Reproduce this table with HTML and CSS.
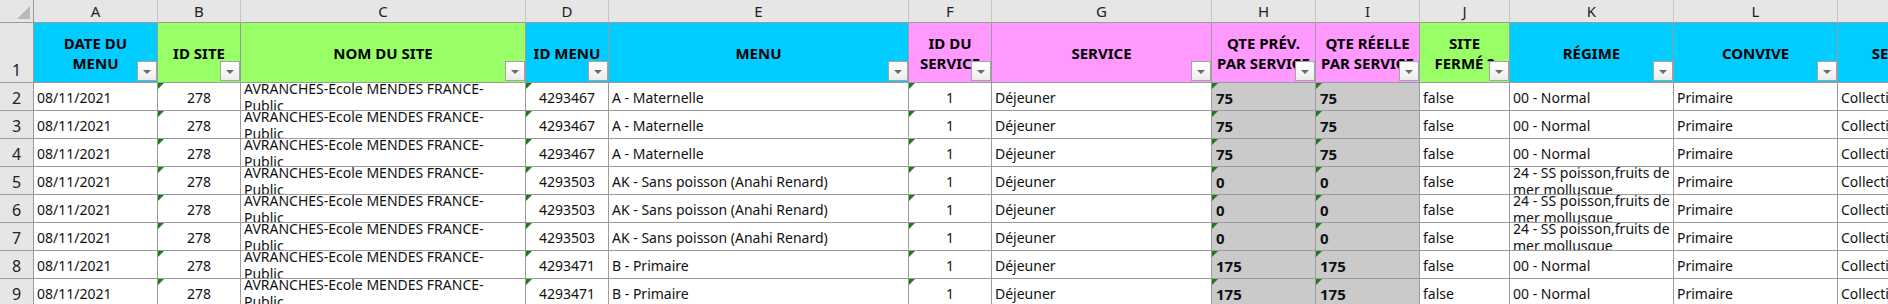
FILE: index.html
```html
<!DOCTYPE html>
<html lang="fr">
<head>
<meta charset="utf-8">
<title>Menus</title>
<link rel="stylesheet" href="styles.css">
</head>
<body>
<div class="sheet">
  <div class="corner"></div>
  <div class="lt">A</div><div class="lt">B</div><div class="lt">C</div><div class="lt">D</div><div class="lt">E</div><div class="lt">F</div><div class="lt">G</div><div class="lt">H</div><div class="lt">I</div><div class="lt">J</div><div class="lt">K</div><div class="lt">L</div><div class="lt">M</div>

  <div class="rn">1</div>
  <div class="h cy"><span>DATE DU<br>MENU</span><i class="fb"></i></div>
  <div class="h gr"><span>ID SITE</span><i class="fb"></i></div>
  <div class="h gr"><span>NOM DU SITE</span><i class="fb"></i></div>
  <div class="h cy"><span>ID MENU</span><i class="fb"></i></div>
  <div class="h cy"><span>MENU</span><i class="fb"></i></div>
  <div class="h pk"><span>ID DU<br>SERVICE</span><i class="fb"></i></div>
  <div class="h pk"><span>SERVICE</span><i class="fb"></i></div>
  <div class="h pk"><span>QTE PRÉV.<br>PAR SERVICE</span><i class="fb"></i></div>
  <div class="h pk"><span>QTE RÉELLE<br>PAR SERVICE</span><i class="fb"></i></div>
  <div class="h gr"><span>SITE<br>FERMÉ ?</span><i class="fb"></i></div>
  <div class="h cy"><span>RÉGIME</span><i class="fb"></i></div>
  <div class="h cy"><span>CONVIVE</span><i class="fb"></i></div>
  <div class="h cy"><span>SECTEUR</span><i class="fb"></i></div>

  <div class="rn">2</div>
  <div class="d">08/11/2021</div><div class="d ctr t">278</div><div class="d wr">AVRANCHES-Ecole MENDES FRANCE-<br>Public</div><div class="d ctr t">4293467</div><div class="d">A - Maternelle</div><div class="d ctr t">1</div><div class="d">Déjeuner</div><div class="d q t">75</div><div class="d q t">75</div><div class="d">false</div><div class="d">00 - Normal</div><div class="d">Primaire</div><div class="d">Collectivité</div>

  <div class="rn">3</div>
  <div class="d">08/11/2021</div><div class="d ctr t">278</div><div class="d wr">AVRANCHES-Ecole MENDES FRANCE-<br>Public</div><div class="d ctr t">4293467</div><div class="d">A - Maternelle</div><div class="d ctr t">1</div><div class="d">Déjeuner</div><div class="d q t">75</div><div class="d q t">75</div><div class="d">false</div><div class="d">00 - Normal</div><div class="d">Primaire</div><div class="d">Collectivité</div>

  <div class="rn">4</div>
  <div class="d">08/11/2021</div><div class="d ctr t">278</div><div class="d wr">AVRANCHES-Ecole MENDES FRANCE-<br>Public</div><div class="d ctr t">4293467</div><div class="d">A - Maternelle</div><div class="d ctr t">1</div><div class="d">Déjeuner</div><div class="d q t">75</div><div class="d q t">75</div><div class="d">false</div><div class="d">00 - Normal</div><div class="d">Primaire</div><div class="d">Collectivité</div>

  <div class="rn">5</div>
  <div class="d">08/11/2021</div><div class="d ctr t">278</div><div class="d wr">AVRANCHES-Ecole MENDES FRANCE-<br>Public</div><div class="d ctr t">4293503</div><div class="d">AK - Sans poisson (Anahi Renard)</div><div class="d ctr t">1</div><div class="d">Déjeuner</div><div class="d q t">0</div><div class="d q t">0</div><div class="d">false</div><div class="d wr">24 - SS poisson,fruits de<br>mer mollusque</div><div class="d">Primaire</div><div class="d">Collectivité</div>

  <div class="rn">6</div>
  <div class="d">08/11/2021</div><div class="d ctr t">278</div><div class="d wr">AVRANCHES-Ecole MENDES FRANCE-<br>Public</div><div class="d ctr t">4293503</div><div class="d">AK - Sans poisson (Anahi Renard)</div><div class="d ctr t">1</div><div class="d">Déjeuner</div><div class="d q t">0</div><div class="d q t">0</div><div class="d">false</div><div class="d wr">24 - SS poisson,fruits de<br>mer mollusque</div><div class="d">Primaire</div><div class="d">Collectivité</div>

  <div class="rn">7</div>
  <div class="d">08/11/2021</div><div class="d ctr t">278</div><div class="d wr">AVRANCHES-Ecole MENDES FRANCE-<br>Public</div><div class="d ctr t">4293503</div><div class="d">AK - Sans poisson (Anahi Renard)</div><div class="d ctr t">1</div><div class="d">Déjeuner</div><div class="d q t">0</div><div class="d q t">0</div><div class="d">false</div><div class="d wr">24 - SS poisson,fruits de<br>mer mollusque</div><div class="d">Primaire</div><div class="d">Collectivité</div>

  <div class="rn">8</div>
  <div class="d">08/11/2021</div><div class="d ctr t">278</div><div class="d wr">AVRANCHES-Ecole MENDES FRANCE-<br>Public</div><div class="d ctr t">4293471</div><div class="d">B - Primaire</div><div class="d ctr t">1</div><div class="d">Déjeuner</div><div class="d q t">175</div><div class="d q t">175</div><div class="d">false</div><div class="d">00 - Normal</div><div class="d">Primaire</div><div class="d">Collectivité</div>

  <div class="rn">9</div>
  <div class="d">08/11/2021</div><div class="d ctr t">278</div><div class="d wr">AVRANCHES-Ecole MENDES FRANCE-<br>Public</div><div class="d ctr t">4293471</div><div class="d">B - Primaire</div><div class="d ctr t">1</div><div class="d">Déjeuner</div><div class="d q t">175</div><div class="d q t">175</div><div class="d">false</div><div class="d">00 - Normal</div><div class="d">Primaire</div><div class="d">Collectivité</div>
</div>
</body>
</html>
```

FILE: styles.css
```css
html, body {
  margin: 0;
  padding: 0;
  background: #ffffff;
  overflow: hidden;
}

.sheet {
  display: grid;
  grid-template-columns: 34px 124px 83px 285px 83px 300px 83px 220px 104px 104px 90px 164px 164px 133px;
  grid-template-rows: 23px 60px repeat(8, 28px);
  font-family: "Noto Sans", "Open Sans", sans-serif;
  color: #111;
  width: max-content;
}

.sheet > div {
  box-sizing: border-box;
  border-right: 1px solid #9b9b9b;
  border-bottom: 1px solid #9b9b9b;
  overflow: hidden;
  position: relative;
  min-width: 0;
}

.corner {
  background: #e6e6e6;
}
.corner::after {
  content: "";
  position: absolute;
  right: 3px;
  bottom: 3px;
  width: 0;
  height: 0;
  border-left: 13px solid transparent;
  border-bottom: 13px solid #b9b9b9;
}

.lt {
  background: #e6e6e6;
  display: flex;
  align-items: center;
  justify-content: center;
  font-size: 15px;
  color: #222;
  border-right-color: #c6c6c6 !important;
}

.rn {
  background: #e6e6e6;
  display: flex;
  align-items: flex-end;
  justify-content: center;
  font-size: 16px;
  line-height: 20px;
  padding-bottom: 2px;
  color: #222;
}

.h {
  display: flex;
  align-items: center;
  justify-content: center;
  text-align: center;
  font-weight: bold;
  font-size: 15px;
  line-height: 20px;
  color: #000;
  white-space: nowrap;
}
.h span {
  display: block;
}
.cy { background: #00ccff; }
.gr { background: #99ff66; }
.pk { background: #ff99ff; }

.fb {
  position: absolute;
  right: 0;
  bottom: 1px;
  width: 20px;
  height: 20px;
  box-sizing: border-box;
  border: 1px solid #a3a3a3;
  background: linear-gradient(#ffffff, #ececec);
}
.fb::after {
  content: "";
  position: absolute;
  left: 5px;
  top: 8px;
  width: 0;
  height: 0;
  border-left: 4px solid transparent;
  border-right: 4px solid transparent;
  border-top: 4px solid #6a6a6a;
}

.d {
  display: flex;
  align-items: flex-end;
  padding: 0 3px 4px 3px;
  font-size: 14px;
  line-height: 17px;
  white-space: nowrap;
  color: #111;
}
.ctr {
  justify-content: center;
}
.wr {
  align-items: center;
  padding-bottom: 0;
}
.q {
  background: #cacaca;
  font-weight: bold;
  font-size: 15px;
  line-height: 20px;
  padding-left: 4px;
  padding-bottom: 2px;
}
.t::before {
  content: "";
  position: absolute;
  left: 0;
  top: 0;
  width: 0;
  height: 0;
  border-top: 6px solid #1d7d1d;
  border-right: 6px solid transparent;
}
```
